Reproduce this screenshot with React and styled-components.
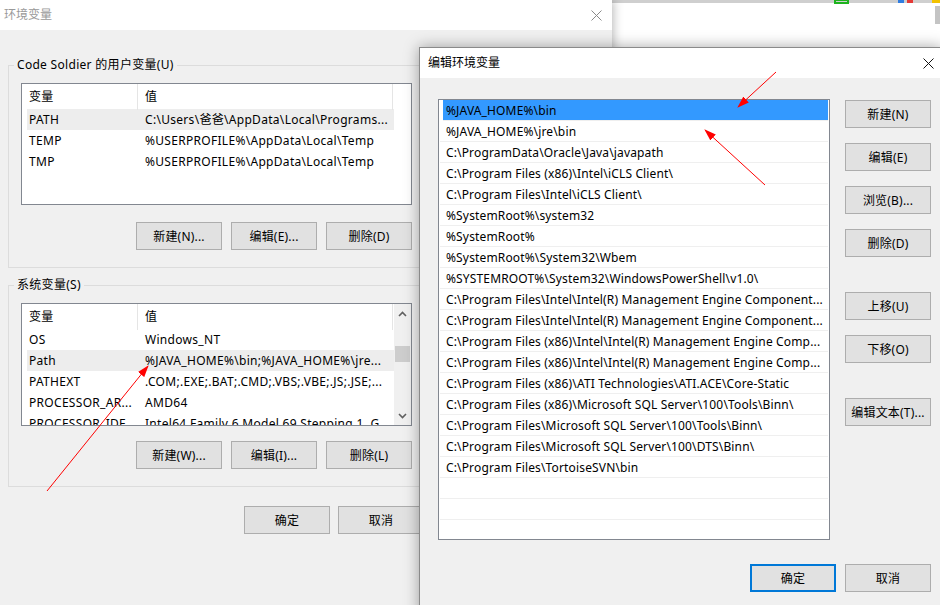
import styled, { createGlobalStyle } from 'styled-components';

const userVars = [
  { name: 'PATH', value: 'C:\\Users\\爸爸\\AppData\\Local\\Programs...', selected: true },
  { name: 'TEMP', value: '%USERPROFILE%\\AppData\\Local\\Temp' },
  { name: 'TMP', value: '%USERPROFILE%\\AppData\\Local\\Temp' },
];

const systemVars = [
  { name: 'OS', value: 'Windows_NT' },
  { name: 'Path', value: '%JAVA_HOME%\\bin;%JAVA_HOME%\\jre...', selected: true },
  { name: 'PATHEXT', value: '.COM;.EXE;.BAT;.CMD;.VBS;.VBE;.JS;.JSE;...' },
  { name: 'PROCESSOR_AR...', value: 'AMD64' },
  { name: 'PROCESSOR_IDE...', value: 'Intel64 Family 6 Model 69 Stepping 1, G...' },
];

const paths = [
  '%JAVA_HOME%\\bin',
  '%JAVA_HOME%\\jre\\bin',
  'C:\\ProgramData\\Oracle\\Java\\javapath',
  'C:\\Program Files (x86)\\Intel\\iCLS Client\\',
  'C:\\Program Files\\Intel\\iCLS Client\\',
  '%SystemRoot%\\system32',
  '%SystemRoot%',
  '%SystemRoot%\\System32\\Wbem',
  '%SYSTEMROOT%\\System32\\WindowsPowerShell\\v1.0\\',
  'C:\\Program Files\\Intel\\Intel(R) Management Engine Component...',
  'C:\\Program Files\\Intel\\Intel(R) Management Engine Component...',
  'C:\\Program Files (x86)\\Intel\\Intel(R) Management Engine Comp...',
  'C:\\Program Files (x86)\\Intel\\Intel(R) Management Engine Comp...',
  'C:\\Program Files (x86)\\ATI Technologies\\ATI.ACE\\Core-Static',
  'C:\\Program Files (x86)\\Microsoft SQL Server\\100\\Tools\\Binn\\',
  'C:\\Program Files\\Microsoft SQL Server\\100\\Tools\\Binn\\',
  'C:\\Program Files\\Microsoft SQL Server\\100\\DTS\\Binn\\',
  'C:\\Program Files\\TortoiseSVN\\bin',
  '',
  '',
  '',
];

const sideButtons = [
  { label: '新建(N)' },
  { label: '编辑(E)' },
  { label: '浏览(B)...' },
  { label: '删除(D)' },
  { label: '上移(U)', spaced: true },
  { label: '下移(O)' },
  { label: '编辑文本(T)...', spaced: true },
];

const GlobalStyle = createGlobalStyle`
  html, body {
    margin: 0;
    padding: 0;
    background: #fff;
  }
  body {
    font-family: "Noto Sans", "Noto Sans CJK SC", sans-serif;
    font-size: 12px;
    letter-spacing: 0.3px;
    color: #000;
  }
`;

const Desktop = styled.div`
  position: relative;
  width: 940px;
  height: 605px;
  overflow: hidden;
  background: #fff;
`;

const BackWindow = styled.div`
  position: absolute;
  left: 612px;
  top: 0;
  width: 330px;
  height: 47px;
  background: #fff;
  border-top: 3px solid #cfcfcf;
  box-sizing: border-box;
`;

const BackScroll = styled.div`
  position: absolute;
  right: 2px;
  top: 3px;
  width: 5px;
  height: 18px;
  background: #c4c4c4;
`;

const EnvWindow = styled.div`
  position: absolute;
  left: 0;
  top: 0;
  width: 612px;
  height: 620px;
  background: #f0f0f0;
  box-shadow: 1px 0 10px rgba(0, 0, 0, 0.3);
  display: flex;
  flex-direction: column;
`;

const TitleBar = styled.div`
  height: ${({ $h }) => $h}px;
  box-sizing: border-box;
  flex-shrink: 0;
  background: #fff;
  display: flex;
  align-items: center;
  justify-content: space-between;
  padding: 0 ${({ $pr }) => $pr}px 3px ${({ $pl }) => $pl}px;
  color: ${({ $active }) => ($active ? '#000' : '#999')};
  font-family: "Noto Sans CJK SC", sans-serif;
  font-size: 12px;
  letter-spacing: 0;
`;

const CloseWrap = styled.div`
  display: flex;
  padding-top: 3px;
`;

const EnvBody = styled.div`
  width: 404px;
  padding: 27px 0 0 8px;
  display: flex;
  flex-direction: column;
`;

const GroupBox = styled.fieldset`
  margin: 0 0 ${({ $mb }) => $mb || 0}px;
  padding: 10px 12px 17px;
  border: 1px solid #dcdcdc;
  width: 591px;
  box-sizing: border-box;
  min-width: 0;
`;

const Legend = styled.legend`
  padding: 0 3px;
  margin-left: -7px;
  line-height: 16px;
  font-size: 12px;
`;

const ListView = styled.div`
  width: 391px;
  height: ${({ $h }) => $h}px;
  box-sizing: border-box;
  border: 1px solid #828790;
  background: #fff;
  display: flex;
  overflow: hidden;
`;

const ListContent = styled.div`
  flex: 1;
  min-width: 0;
`;

const HeaderRow = styled.div`
  display: grid;
  grid-template-columns: 116px 255px;
  height: 25px;
`;

const HeaderCell = styled.div`
  padding-left: 7px;
  line-height: 26px;
  border-right: 1px solid #e5e5e5;
`;

const VarRow = styled.div`
  margin-left: 5px;
  width: 367px;
  display: grid;
  grid-template-columns: 111px 256px;
  height: 21px;
  line-height: 22px;
  background: ${({ $selected }) => ($selected ? '#ededed' : 'transparent')};
`;

const VarCell = styled.div`
  padding-left: ${({ $first }) => ($first ? 2 : 7)}px;
  white-space: nowrap;
  overflow: hidden;
`;

const ScrollBar = styled.div`
  width: 17px;
  flex-shrink: 0;
  background: #f0f0f0;
  display: flex;
  flex-direction: column;
  align-items: center;
`;

const ScrollArrow = styled.div`
  width: 17px;
  height: 19px;
  display: flex;
  align-items: center;
  justify-content: center;
  flex-shrink: 0;
`;

const ScrollTrack = styled.div`
  flex: 1;
  width: 100%;
  display: flex;
  justify-content: center;
`;

const ScrollThumb = styled.div`
  width: 15px;
  height: 16px;
  background: #cdcdcd;
`;

const ButtonRow = styled.div`
  display: flex;
  justify-content: flex-end;
  gap: ${({ $gap }) => $gap || 9}px;
  margin-top: ${({ $mt }) => $mt}px;
  width: ${({ $w }) => ($w ? `${$w}px` : 'auto')};
`;

const Button = styled.button`
  width: 86px;
  height: 28px;
  box-sizing: border-box;
  margin: 0;
  margin-top: ${({ $spaced }) => ($spaced ? 20 : 0)}px;
  padding: 0;
  background: #e1e1e1;
  border: ${({ $primary }) => ($primary ? '2px solid #0078d7' : '1px solid #adadad')};
  font-family: "Noto Sans", "Noto Sans CJK SC", sans-serif;
  font-size: 12px;
  letter-spacing: 0.2px;
  color: #000;
  flex-shrink: 0;
`;

const EditDialog = styled.div`
  position: absolute;
  left: 419px;
  top: 47px;
  width: 523px;
  height: 570px;
  box-sizing: border-box;
  background: #f0f0f0;
  border: 1px solid #8a8a8a;
  box-shadow: 0 0 14px rgba(0, 0, 0, 0.35);
  display: flex;
  flex-direction: column;
`;

const EditBody = styled.div`
  padding: 21px 10px 0 18px;
  display: flex;
  flex-direction: column;
`;

const EditMain = styled.div`
  display: flex;
  gap: 15px;
`;

const PathList = styled.div`
  width: 392px;
  height: 441px;
  box-sizing: border-box;
  border: 1px solid #828790;
  background: #fff;
  padding: 0 1px;
  overflow: hidden;
  letter-spacing: 0.15px;
`;

const PathRow = styled.div`
  height: 21px;
  box-sizing: border-box;
  padding-top: 2px;
  line-height: 18px;
  border-bottom: 1px solid #efefef;
  white-space: nowrap;
  overflow: hidden;
  margin-left: ${({ $selected }) => ($selected ? 3 : 0)}px;
  padding-left: ${({ $selected }) => ($selected ? 3 : 6)}px;
  background: ${({ $selected }) => ($selected ? '#3399ff' : 'transparent')};
`;

const SideButtons = styled.div`
  display: flex;
  flex-direction: column;
  gap: 15px;
  padding-top: 1px;
`;

const Overlay = styled.svg`
  position: absolute;
  left: 0;
  top: 0;
  pointer-events: none;
`;

const CloseIcon = ({ color }) => (
  <CloseWrap>
    <svg width="11" height="11" viewBox="0 0 11 11">
      <path d="M0.5 0.5 L10.5 10.5 M10.5 0.5 L0.5 10.5" stroke={color} strokeWidth="1" />
    </svg>
  </CloseWrap>
);

const Chevron = ({ up }) => (
  <svg width="9" height="6" viewBox="0 0 9 6">
    <path d={up ? 'M1 5 L4.5 1.5 L8 5' : 'M1 1 L4.5 4.5 L8 1'} stroke="#606060" strokeWidth="1.6" fill="none" />
  </svg>
);

const VarList = ({ rows, height, scroll }) => (
  <ListView $h={height}>
    <ListContent>
      <HeaderRow>
        <HeaderCell>变量</HeaderCell>
        <HeaderCell>值</HeaderCell>
      </HeaderRow>
      {rows.map((r) => (
        <VarRow key={r.name} $selected={r.selected}>
          <VarCell $first>{r.name}</VarCell>
          <VarCell>{r.value}</VarCell>
        </VarRow>
      ))}
    </ListContent>
    {scroll && (
      <ScrollBar>
        <ScrollArrow><Chevron up /></ScrollArrow>
        <ScrollTrack>
          <ScrollThumb style={{ marginTop: `${scroll}px` }} />
        </ScrollTrack>
        <ScrollArrow><Chevron /></ScrollArrow>
      </ScrollBar>
    )}
  </ListView>
);

const Arrow = ({ x1, y1, x2, y2 }) => (
  <line x1={x1} y1={y1} x2={x2} y2={y2} stroke="#ff0000" strokeWidth="1" markerEnd="url(#head)" />
);

const App = () => (
  <Desktop>
    <GlobalStyle />
    <BackWindow>
      <svg width="330" height="4" style={{ position: 'absolute', top: -3, left: 0 }}>
        <rect x="223" y="0" width="13" height="3" fill="none" stroke="#1db31d" strokeWidth="2" />
        <rect x="286" y="0" width="6" height="3" fill="#2f7de1" />
        <rect x="295" y="0" width="6" height="3" fill="#e53935" />
        <rect x="320" y="0" width="8" height="3" fill="#f2c200" />
      </svg>
      <BackScroll />
    </BackWindow>

    <EnvWindow>
      <TitleBar $h={30} $pl={4} $pr={10}>
        <span>环境变量</span>
        <CloseIcon color="#8a8a8a" />
      </TitleBar>
      <EnvBody>
        <GroupBox $mb={9}>
          <Legend>Code Soldier 的用户变量(U)</Legend>
          <VarList rows={userVars} height={122} />
          <ButtonRow $mt={17} $w={391}>
            <Button>新建(N)...</Button>
            <Button>编辑(E)...</Button>
            <Button>删除(D)</Button>
          </ButtonRow>
        </GroupBox>
        <GroupBox>
          <Legend>系统变量(S)</Legend>
          <VarList rows={systemVars} height={123} scroll={23} />
          <ButtonRow $mt={15} $w={391}>
            <Button>新建(W)...</Button>
            <Button>编辑(I)...</Button>
            <Button>删除(L)</Button>
          </ButtonRow>
        </GroupBox>
        <ButtonRow $mt={19} $gap={8} $w={416}>
          <Button>确定</Button>
          <Button>取消</Button>
        </ButtonRow>
      </EnvBody>
    </EnvWindow>

    <EditDialog>
      <TitleBar $h={30} $pl={8} $pr={7} $active>
        <span>编辑环境变量</span>
        <CloseIcon color="#111" />
      </TitleBar>
      <EditBody>
        <EditMain>
          <PathList>
            {paths.map((p, i) => (
              <PathRow key={i} $selected={i === 0}>{p}</PathRow>
            ))}
          </PathList>
          <SideButtons>
            {sideButtons.map((b) => (
              <Button key={b.label} $spaced={b.spaced}>{b.label}</Button>
            ))}
          </SideButtons>
        </EditMain>
        <ButtonRow $mt={24}>
          <Button $primary>确定</Button>
          <Button>取消</Button>
        </ButtonRow>
      </EditBody>
    </EditDialog>

    <Overlay width="940" height="605">
      <defs>
        <marker id="head" markerUnits="userSpaceOnUse" markerWidth="12" markerHeight="10" refX="11" refY="5" orient="auto">
          <path d="M0 1 L12 5 L0 9 Z" fill="#ff0000" />
        </marker>
      </defs>
      <Arrow x1={47} y1={491} x2={148} y2={366} />
      <Arrow x1={776} y1={72} x2={738} y2={107} />
      <Arrow x1={765} y1={185} x2={705} y2={130} />
    </Overlay>
  </Desktop>
);

export default App;
